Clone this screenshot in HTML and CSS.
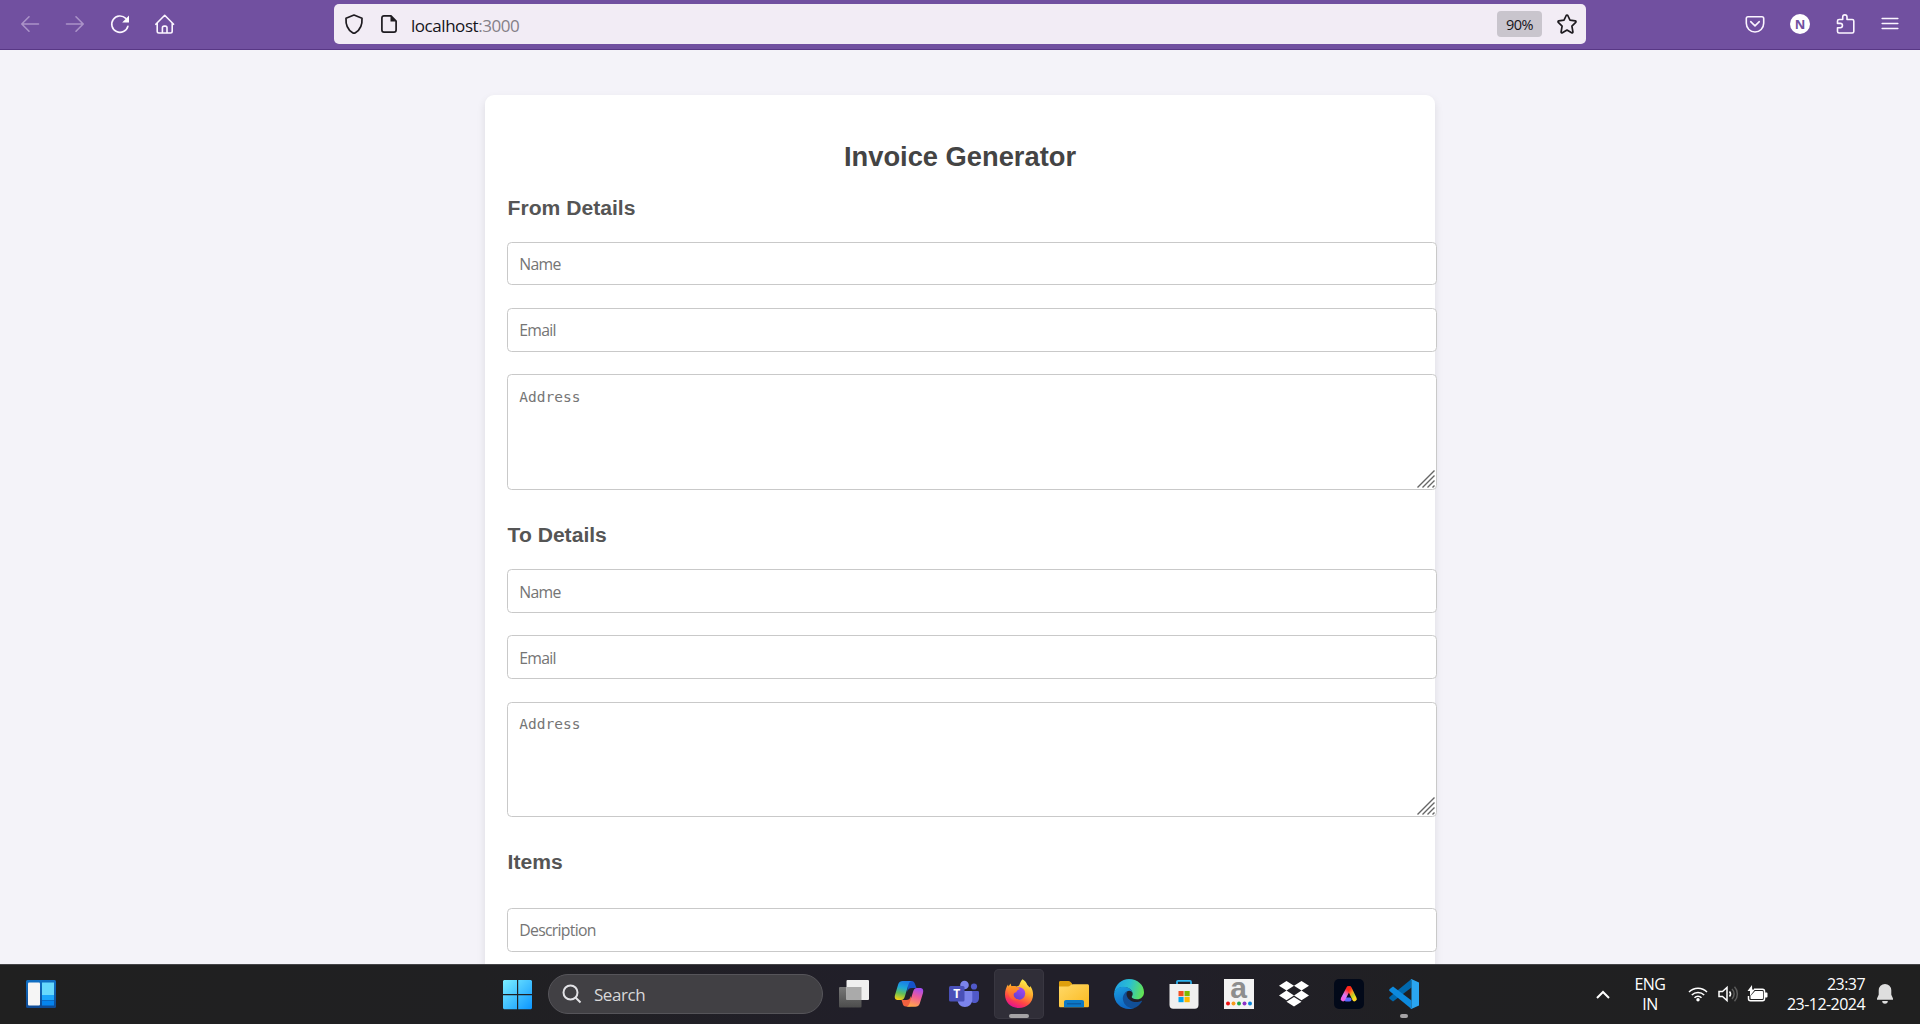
FILE: index.html
```html
<!DOCTYPE html>
<html lang="en">
<head>
<meta charset="utf-8">
<title>Invoice Generator</title>
<link rel="stylesheet" href="styles.css">
</head>
<body>
<header class="toolbar">
  <nav class="nav">
    <svg class="dim" viewBox="0 0 20 20"><path d="M18.500 10H2M9 2.800 1.800 10 9 17.200"/></svg>
    <svg class="dim" viewBox="0 0 20 20"><path d="M1.500 10H18M11 2.800 18.200 10 11 17.200"/></svg>
    <svg viewBox="0 0 20 20"><path d="M17.900 12.200A8.200 8.200 0 1 1 15.800 4.400"/><path class="solid" d="M19 1.600v6.800h-6.800z"/></svg>
    <svg viewBox="0 0 20 20"><path d="M.8 10.300 9.700 1.300l8.900 9M2.200 9v8.300c0 1 .7 1.700 1.700 1.700h11.600c1 0 1.700-.7 1.700-1.700V9M7.400 19v-5.200c0-1 .7-1.700 1.700-1.700h1.200c1 0 1.700.7 1.700 1.700V19"/></svg>
  </nav>
  <div class="urlbar">
    <svg viewBox="0 0 20 20"><path d="M10 1 18 4.200c.4 6-1.800 11.600-6.600 14.500a2.700 2.700 0 0 1-2.800 0C3.800 15.800 1.600 10.200 2 4.200z"/></svg>
    <svg class="doc" viewBox="0 0 20 20"><path d="M12 1.900H5C3.700 1.900 2.900 2.700 2.900 4v12c0 1.300.8 2.100 2.100 2.100h10c1.300 0 2.100-.8 2.100-2.100V7z"/><path class="solid" d="M11.500 1.500v6H17z"/></svg>
    <div class="url">localhost<span>:3000</span></div>
    <div class="zoom">90%</div>
    <svg class="star" viewBox="0 0 20 20"><path d="M9.200 1.500a.9.9 0 0 1 1.600 0l2.200 4.700 5.200.7c.8.1 1.100 1 .5 1.500l-3.800 3.700 1 5.800c.1.700-.6 1.200-1.300.9L10 16l-4.600 2.800c-.7.3-1.400-.2-1.300-.9l1-5.800L1.300 8.400c-.6-.5-.3-1.400.5-1.500l5.200-.7z"/></svg>
  </div>
  <nav class="tools">
    <svg viewBox="0 0 20 20"><path d="M3 2.700h14c1 0 1.700.7 1.700 1.700V9.300A8.700 8.700 0 0 1 1.300 9.300V4.400c0-1 .7-1.700 1.700-1.700zM5.700 7.700 10 11.800l4.300-4.100"/></svg>
    <div class="avatar">N</div>
    <svg viewBox="0 0 20 20"><path d="M2.500 8.500V7.100c0-1 .6-1.600 1.600-1.600h3.600V3A2.100 2.100 0 0 1 12 3v2.500h5.200c1 0 1.600.6 1.600 1.600v10.300c0 1-.6 1.600-1.600 1.600H4.100c-1 0-1.600-.6-1.600-1.600v-3.700h2.800a2.100 2.100 0 0 0 0-4.300H2.500z"/></svg>
    <svg viewBox="0 0 20 20"><path d="M2.200 4.500h15.600M2.200 9.500h15.600M2.200 14.500h15.600"/></svg>
  </nav>
</header>

<main class="page">
  <form class="card">
    <h1>Invoice Generator</h1>
    <section class="group from">
      <h2>From Details</h2>
      <input type="text" placeholder="Name">
      <input type="text" placeholder="Email">
      <div class="area"><textarea placeholder="Address"></textarea><svg viewBox="0 0 18 18"><path d="M.5 17.500 17.500.5M5.500 17.500l12-12M10.500 17.500l7-7M15.500 17.500l2-2"/></svg></div>
    </section>
    <section class="group to">
      <h2>To Details</h2>
      <input type="text" placeholder="Name">
      <input type="text" placeholder="Email">
      <div class="area"><textarea placeholder="Address"></textarea><svg viewBox="0 0 18 18"><path d="M.5 17.500 17.500.5M5.500 17.500l12-12M10.500 17.500l7-7M15.500 17.500l2-2"/></svg></div>
    </section>
    <section class="group items">
      <h2>Items</h2>
      <input type="text" placeholder="Description">
    </section>
  </form>
</main>

<footer class="taskbar">
  <svg class="widgets" viewBox="0 0 30 30">
    <defs>
      <linearGradient id="wid" x1="0" y1="0" x2="0" y2="1"><stop offset="0" stop-color="#0f6fc4"/><stop offset="1" stop-color="#0e4a94"/></linearGradient>
      <linearGradient id="win" gradientUnits="userSpaceOnUse" x1="0" y1="0" x2="30" y2="30"><stop offset="0" stop-color="#7df0ff"/><stop offset="1" stop-color="#0a94ff"/></linearGradient>
    </defs>
    <rect y="1" width="30" height="28" rx="1.500" fill="url(#wid)"/><rect x="2" y="3.500" width="12" height="23" rx="1" fill="#f5f5f5"/><rect x="16" y="3.500" width="12" height="12.500" fill="#67d9fd"/><rect x="16" y="16" width="12" height="5" fill="#1aa5fb"/><rect x="16" y="21.500" width="12" height="5" fill="#0684ee"/>
  </svg>
  <div class="center">
    <svg class="start" viewBox="0 0 30 30"><path fill="url(#win)" d="M0 2 1 1h13v14H0zM15.200 1H28l1 1v13H15.200zM0 16.200h14v14H1l-1-1zM15.200 16.200H29v13l-1 1H15.200z"/></svg>
    <div class="search">
      <svg viewBox="0 0 20 20"><circle cx="8.500" cy="8.500" r="7"/><path d="m13.500 13.500 5 5"/></svg>
      <span>Search</span>
    </div>
    <div class="apps">
      <div class="app"><svg viewBox="0 0 30 30">
        <defs><linearGradient id="tv" x1="0" y1="0" x2="0" y2="1"><stop offset="0" stop-color="#777"/><stop offset="1" stop-color="#4c4c4c"/></linearGradient></defs>
        <rect y="8" width="22.500" height="20.500" rx="1" fill="url(#tv)"/><rect x="7.500" y="1" width="22.500" height="20" rx="1" fill="#f0f0f0"/><path fill="#aaa" d="M7.500 8h15v13h-15z"/></svg></div>
      <div class="app"><svg viewBox="0 0 30 30">
        <defs>
          <linearGradient id="cpa" x1=".5" y1="0" x2=".3" y2="1"><stop offset="0" stop-color="#1b7ce8"/><stop offset=".35" stop-color="#1ea8d8"/><stop offset=".65" stop-color="#63bf58"/><stop offset="1" stop-color="#f5cf15"/></linearGradient>
          <linearGradient id="cpb" x1=".7" y1="0" x2=".4" y2="1"><stop offset="0" stop-color="#a24df2"/><stop offset=".45" stop-color="#ee5b9a"/><stop offset="1" stop-color="#ffa64b"/></linearGradient>
        </defs>
        <path fill="#1553c8" d="M14 2h3.500c2.200 0 3 1.300 3.600 3.200L22.500 9H18c-3 0-4 1.500-4.800 4z"/>
        <path fill="#f0603e" d="M7.500 21h4.600c2.500 0 3.800-1 4.700-4l1 5.500-1.500 5H12c-2.500 0-3-1.500-3.500-3.500z"/>
        <path fill="url(#cpa)" d="M8.800 2h9c-2 .4-2.800 1.700-3.500 4L11 17c-.8 2.600-1.800 4-4 4H4c-3 0-3.700-2.200-3-5L4.300 5C5 3 6.500 2 8.800 2z"/>
        <path fill="url(#cpb)" d="M21.200 27.800h-9c2-.4 2.800-1.700 3.500-4L19 13c.8-2.600 1.800-4 4-4h3c3 0 3.700 2.200 3 5l-3.300 10.800c-.7 2-2.200 3-4.500 3z"/></svg></div>
      <div class="app"><svg viewBox="0 0 30 30">
        <circle cx="15.500" cy="6" r="4.300" fill="#7b83eb"/><circle cx="25" cy="7.500" r="3.100" fill="#5059c9"/><path fill="#5059c9" d="M21 12h7.500c1 0 1.500.5 1.500 1.500V19c0 3-2 5-4.500 5S21 22 21 19z"/><path fill="#7b83eb" d="M8.500 12H22c.8 0 1.300.5 1.300 1.300v7.200c0 4.500-3.300 7.500-7.400 7.500s-7.400-3-7.400-7.500z"/><rect y="7" width="15.500" height="15.500" rx="1.500" fill="#4950b8"/><text class="tee" x="7.700" y="19" text-anchor="middle">T</text></svg></div>
      <div class="app active"><svg viewBox="0 0 30 30">
        <defs>
          <linearGradient id="fxa" x1=".8" y1=".1" x2=".4" y2="1"><stop offset="0" stop-color="#ffec4a"/><stop offset=".4" stop-color="#ffa52c"/><stop offset=".75" stop-color="#ff4545"/><stop offset="1" stop-color="#e8148a"/></linearGradient>
          <linearGradient id="fxb" x1=".8" y1="0" x2=".2" y2="1"><stop offset="0" stop-color="#a848f5"/><stop offset="1" stop-color="#5b40d0"/></linearGradient>
          <linearGradient id="fxc" x1="0" y1="0" x2="0" y2="1"><stop offset="0" stop-color="#ff9a22"/><stop offset="1" stop-color="#ff5140"/></linearGradient>
        </defs>
        <path fill="url(#fxa)" d="M18.500.3c2.600 1.300 4 3.500 4.700 5.500l2.500 2.700.5-1.500c2 2.500 2.900 5.200 2.900 8.500 0 8-6.200 13.400-14.200 13.400S1 23.500 1 15.500C1 11.500 2.300 8 4 5.500l.5 2 2-3 1 3c2-.8 3.600-.8 5 0 1-.2 2-.5 2.800-1.500.8-2 1.500-4 3.200-5.700z"/>
        <circle cx="15" cy="14.500" r="6.200" fill="url(#fxb)"/><path fill="url(#fxc)" d="M4 9c3-2.500 6.500-2.500 9-.5 1.600.2 2.400.8 2.800 1.600-.8 1-3 .9-3.500 3.100-1.800 0-2.900 1.400-2.600 3.200.5 2.500 2.800 3.900 5.300 3.900-4 3-11.500.5-11-11.300z"/></svg></div>
      <div class="app"><svg viewBox="0 0 30 30">
        <defs><linearGradient id="fold" x1="0" y1="0" x2="1" y2="1"><stop offset="0" stop-color="#ffd968"/><stop offset="1" stop-color="#fbb91f"/></linearGradient></defs>
        <path fill="#dfa00c" d="M0 9V3.500C0 2.500.6 2 1.500 2h8c.8 0 1.300.2 1.800.8L13 4.500V9z"/><path fill="url(#fold)" d="M0 7.500h9c1 0 1.600-.3 2.200-.9l.8-.7c.5-.5 1-.7 1.700-.7h14.800c.9 0 1.500.6 1.500 1.500v20c0 1-.6 1.600-1.500 1.600h-27C.6 28.300 0 27.700 0 26.700z"/><path fill="#0c79c6" d="M5 28.300V23c0-1.200.8-2 2-2h16c1.200 0 2 .8 2 2v5.300z"/><path fill="#0b5ca2" d="M8 24h14v1.500H8z"/></svg></div>
      <div class="app"><svg viewBox="0 0 30 30">
        <defs>
          <linearGradient id="eda" x1="0" y1=".3" x2="1" y2=".5"><stop offset="0" stop-color="#1fa0e6"/><stop offset=".5" stop-color="#2bc0d0"/><stop offset="1" stop-color="#62e354"/></linearGradient>
          <linearGradient id="edb" x1="0" y1="0" x2=".3" y2="1"><stop offset="0" stop-color="#1ba0e0"/><stop offset="1" stop-color="#0f67c4"/></linearGradient>
        </defs>
        <path fill="url(#eda)" d="M.3 13.500C1.300 5.500 7.500 0 15 0c8.500 0 15 6 15 13.200 0 4.300-3 7-7 7-3.300 0-5.300-1.200-5.300-2.200 0-.8 1-1.200 1-3.200C18.700 11 14.500 8 9.500 8 5.500 8 2 10 .3 13.500z"/>
        <path fill="url(#edb)" d="M0 15C.5 10.500 4.500 7.700 9.300 7.700c5.200 0 9.400 3.300 9.400 7.100 0-1.800-1.800-3-3.500-3-3 0-5 3.200-5 7C10.200 24.500 14.500 29 20 29c-1.500.7-3 1-5 1C6.500 30 0 23.300 0 15z"/>
        <path fill="#114f98" d="M14 12.200c-3.300.8-5.700 4.600-5 8.600.8 5 5 8.700 10.500 8.500 3.700-1.200 6.500-3.500 8.300-6.500.4-.7-.2-1.200-.8-.8-1.300.7-3 1.100-4.600 1.100-5.600 0-9.900-3.900-9.900-8.100 0-1 .5-2 1.500-2.800z"/></svg></div>
      <div class="app"><svg viewBox="0 0 30 30">
        <path fill="none" stroke="#2db4f0" stroke-width="1.700" d="M8 6V2.800c0-.6.400-1 1-1h12c.6 0 1 .4 1 1V6"/><path fill="#f0f0f0" d="M.5 5h29v21c0 2.200-1.300 3.700-3.700 3.700H4.200C1.800 29.700.5 28.200.5 26z"/><path fill="#f25022" d="M9.500 12H14.600v5.200H9.500z"/><path fill="#7fba00" d="M15.500 12h5.200v5.200h-5.200z"/><path fill="#00a4ef" d="M9.500 18H14.600v5.200H9.500z"/><path fill="#ffb900" d="M15.500 18h5.200v5.200h-5.200z"/></svg></div>
      <div class="app"><svg viewBox="0 0 30 30">
        <path fill="#f3f3f3" d="M0 0h30v30H0z"/><text class="letter" x="14.500" y="19" text-anchor="middle">a</text><circle cx="4" cy="24.500" r="2" fill="#e11"/><circle cx="9.500" cy="24.500" r="2" fill="#f79a1c"/><circle cx="15" cy="24.500" r="2" fill="#1da64a"/><circle cx="20.500" cy="24.500" r="2" fill="#8b32c8"/><circle cx="26" cy="24.500" r="2" fill="#0b85d9"/></svg></div>
      <div class="app"><svg viewBox="0 0 30 30">
        <path fill="#fff" d="m7.500 2 7.500 4.800-7.500 4.800L0 6.800zM22.500 2 30 6.800l-7.500 4.800L15 6.800zM7.500 11.600l7.500 4.800-7.500 4.800L0 16.400zM22.500 11.600l7.500 4.800-7.500 4.800-7.500-4.800zM15 18l7.500 4.700-7.500 4.800-7.500-4.800z"/></svg></div>
      <div class="app"><svg viewBox="0 0 30 30">
        <defs>
          <linearGradient id="ada" x1=".6" y1="0" x2=".2" y2="1"><stop offset="0" stop-color="#ff2020"/><stop offset=".35" stop-color="#f55a9a"/><stop offset=".7" stop-color="#d07cff"/><stop offset="1" stop-color="#f060e0"/></linearGradient>
          <linearGradient id="adb" x1=".2" y1="0" x2=".8" y2="1"><stop offset="0" stop-color="#ff2a18"/><stop offset=".4" stop-color="#ff9a20"/><stop offset=".75" stop-color="#b8d828"/><stop offset="1" stop-color="#ffd820"/></linearGradient>
        </defs>
        <rect width="30" height="30" rx="5" fill="#020919"/>
        <path fill="none" stroke="#5a68ff" stroke-width="4" stroke-linecap="round" d="M12 20.500h3.500"/>
        <path fill="none" stroke="url(#ada)" stroke-width="4.600" stroke-linecap="round" d="M14.500 9.500 9 20"/>
        <path fill="none" stroke="url(#adb)" stroke-width="4.600" stroke-linecap="round" d="M15.500 9.500 20.500 20"/></svg></div>
      <div class="app running"><svg viewBox="0 0 30 30">
        <path fill="#0068ad" d="M22.500 0v8.500L4 22.500.5 19.800c-.5-.5-.5-1.200 0-1.700z"/><path fill="#0d8ade" d="M4 7.500.5 10.200c-.5.500-.5 1.200 0 1.700l22 18v-8.500z"/><path fill="#2aa5f0" d="M22.300 0 30 3.500v23L22.300 30c-.8 0-1.300-.3-1.300-.3 1 .3 1.500-.3 1.500-1.200v-27c0-.9-.5-1.500-1.500-1.200z"/></svg></div>
    </div>
  </div>
  <div class="tray">
    <svg class="chev" viewBox="0 0 14 9"><path d="m1 8 6-6 6 6"/></svg>
    <div class="lang">ENG<br>IN</div>
    <svg class="wifi" viewBox="0 0 20 16"><path d="M1 6a12.700 12.700 0 0 1 18 0M3.800 9a8.700 8.700 0 0 1 12.400 0M6.500 11.800a5 5 0 0 1 7 0"/><circle cx="10" cy="13.800" r="1.700"/></svg>
    <svg class="vol" viewBox="0 0 20 18"><path d="M1 6.500v5h3.500l4.500 4V2.500l-4.500 4zM11.500 6.500a3.800 3.800 0 0 1 0 5"/><path class="faint" d="M14 4a7 7 0 0 1 0 10M16.500 1.800a10.500 10.500 0 0 1 0 14.400"/></svg>
    <svg class="batt" viewBox="0 0 21 18"><path d="M7 4.200h8.500c1.200 0 2 .8 2 2v7.600c0 1.200-.8 2-2 2h-12c-1.200 0-2-.8-2-2V11"/><path class="fill" d="M8 6h7c.7 0 1 .4 1 1v6c0 .7-.3 1-1 1H4.500c-.7 0-1-.3-1-1v-2zM18 7.500h1.500c.6 0 1 .3 1 1v3c0 .7-.4 1-1 1H18zM5 0 .5 6H3v5l5-6.500H5.200z"/></svg>
    <div class="clock">23:37<br>23-12-2024</div>
    <svg class="bell" viewBox="0 0 16 20"><path d="M8 0a6.300 6.300 0 0 1 6.300 6.300v4.500L16 14.500v1.300H0v-1.300l1.700-3.700V6.300A6.300 6.300 0 0 1 8 0zM5.200 17h5.600a2.800 2.800 0 0 1-5.600 0z"/></svg>
  </div>
</footer>
</body>
</html>
```
FILE: styles.css
```css
* { box-sizing: border-box; }

body {
  margin: 0;
  height: 1024px;
  display: grid;
  grid-template-rows: 50px 914px 60px;
  overflow: hidden;
  background: #f4f3f9;
  font-family: "Open Sans", "Noto Sans", sans-serif;
}

svg { display: block; flex: none; overflow: visible; }

/* Browser toolbar */
.toolbar {
  display: grid;
  grid-template-columns: 334px 1252px 1fr;
  padding-top: 4px;
  background: #7150a0;
  border-bottom: 1px solid #583785;
}
.nav, .tools { display: flex; height: 40px; align-items: center; }
.nav { gap: 25px; padding-left: 20px; }
.tools { gap: 25px; padding-left: 159px; }
.nav svg, .tools svg {
  width: 20px; height: 20px;
  fill: none; stroke: #fbf5ff; stroke-width: 1.6;
  stroke-linecap: round; stroke-linejoin: round;
}
.nav .dim { stroke: #ab93c8; }
.nav .solid { fill: #fff; stroke: none; }
.avatar {
  width: 20px; height: 20px; border-radius: 50%;
  background: #fff; color: #7150a0;
  font: bold 13px/20px "Open Sans", sans-serif; text-align: center;
}
.urlbar {
  display: flex; align-items: center; height: 40px; padding: 0 9px 0 10px;
  background: #f2ecf5; border-radius: 5px;
}
.urlbar svg {
  width: 20px; height: 20px; fill: none; stroke: #1e1b20; stroke-width: 1.7;
  stroke-linejoin: round;
}
.urlbar .doc { margin-left: 15px; }
.urlbar .solid { fill: #1e1b20; stroke: none; }
.url { flex: 1; margin-left: 12px; padding-top: 2px; font-size: 17px; letter-spacing: -0.45px; color: #15141a; }
.url span { color: #858087; }
.zoom {
  width: 45px; height: 26px; margin-right: 15px; border-radius: 4px;
  background: #c9c5cd; color: #15141a;
  font-size: 14.5px; line-height: 27px; text-align: center; letter-spacing: -0.6px;
}

/* Invoice form */
.page { padding-top: 45px; overflow: hidden; }
.card {
  width: 950px; height: 1100px; margin: 0 auto; padding: 46px 22px 22px;
  background: #fff; border-radius: 9px;
  box-shadow: 0 4px 9px rgba(0, 0, 0, 0.1);
}
h1, h2 { margin: 0; font-family: "Liberation Sans", Arial, sans-serif; font-weight: bold; }
h1 { font-size: 27.3px; line-height: 32px; text-align: center; color: #444; }
h2 { height: 24px; margin-bottom: 22px; padding-left: 0.6px; font-size: 21.1px; line-height: 24px; color: #555; }
.group { width: 930px; height: 327px; margin-top: 23px; }
.group + .group { margin-top: 0; }
.items h2 { margin-bottom: 34px; }
input, textarea {
  display: block; width: 100%; margin: 0 0 22px; padding: 0 11.25px;
  border: 1px solid #c9c9c9; border-radius: 4.5px; background: #fff; outline: none;
}
input { height: 44px; font: 15.8px "Open Sans", sans-serif; letter-spacing: -0.72px; }
.from input:first-of-type { height: 43px; margin-bottom: 23px; }
.to input:first-of-type { padding-top: 1px; }
.to input:last-of-type { padding-top: 1px; margin-bottom: 23px; }
textarea {
  height: 116px; padding-top: 13px; resize: none;
  font: 14.5px/18px "DejaVu Sans Mono", monospace;
}
.to textarea { height: 115px; padding-top: 12px; }
::placeholder { color: #757575; opacity: 1; }
.area { position: relative; }
.area svg {
  position: absolute; right: 2px; bottom: 2px; width: 18px; height: 18px;
  fill: none; stroke: #666; stroke-width: 1.4;
}

/* Desktop taskbar */
.taskbar {
  display: grid; grid-template-columns: 503px 1fr 325px; align-items: center;
  padding-bottom: 1px;
  background: linear-gradient(90deg, #202020 0, #202022 25%, #211f29 45%, #211f29 60%, #202022 75%, #202020 100%);
  border-top: 1px solid #444447; color: #fff;
}
.widgets { width: 30px; height: 30px; margin-left: 26px; }
.center { display: flex; align-items: center; height: 58px; }
.start { width: 30px; height: 30px; }
.search {
  display: flex; align-items: center; gap: 12px;
  width: 275px; height: 40px; margin-left: 15px; padding-left: 13px;
  background: #414044; border: 1px solid #56555a; border-radius: 20px;
  font-size: 17px; letter-spacing: -0.45px; color: #d8d8d9;
}
.search svg { width: 20px; height: 20px; fill: none; stroke: #e2e2e6; stroke-width: 2; }
.apps { display: flex; gap: 5px; margin-left: 6px; }
.app {
  position: relative; display: grid; place-items: center;
  width: 50px; height: 50px; border-radius: 5px;
}
.app svg { width: 30px; height: 30px; }
.active { background: #302e38; box-shadow: inset 0 0 0 1px #393741; }
.active::after, .running::after {
  content: ""; position: absolute; bottom: 1px; left: 15px;
  width: 20px; height: 4px; border-radius: 2px; background: #a5a3a6;
}
.running::after { left: 21px; width: 8px; }
.letter { font: bold 30px "Liberation Sans", sans-serif; fill: #8e8e8e; }
.tee { font: bold 12px "Open Sans", sans-serif; fill: #fff; }
.tray { display: flex; align-items: center; height: 58px; font-size: 16px; line-height: 20px; letter-spacing: -0.55px; }
.tray svg { fill: none; stroke: #fff; stroke-width: 1.5; }
.tray .chev { width: 14px; height: 9px; margin-left: 1px; stroke-width: 2; }
.lang { width: 40px; margin-left: 20px; text-align: center; }
.tray .wifi { width: 20px; height: 16px; margin-left: 18px; }
.tray .wifi circle { fill: #fff; stroke: none; }
.tray .vol { width: 20px; height: 18px; margin-left: 10px; }
.tray .faint { stroke: #5c5c5c; }
.tray .batt { width: 21px; height: 18px; margin-left: 9px; }
.tray .batt .fill { fill: #fff; stroke: none; }
.clock { width: 97px; text-align: right; }
.tray .bell { width: 16px; height: 20px; margin-left: 12px; fill: #dedede; stroke: none; }
```
